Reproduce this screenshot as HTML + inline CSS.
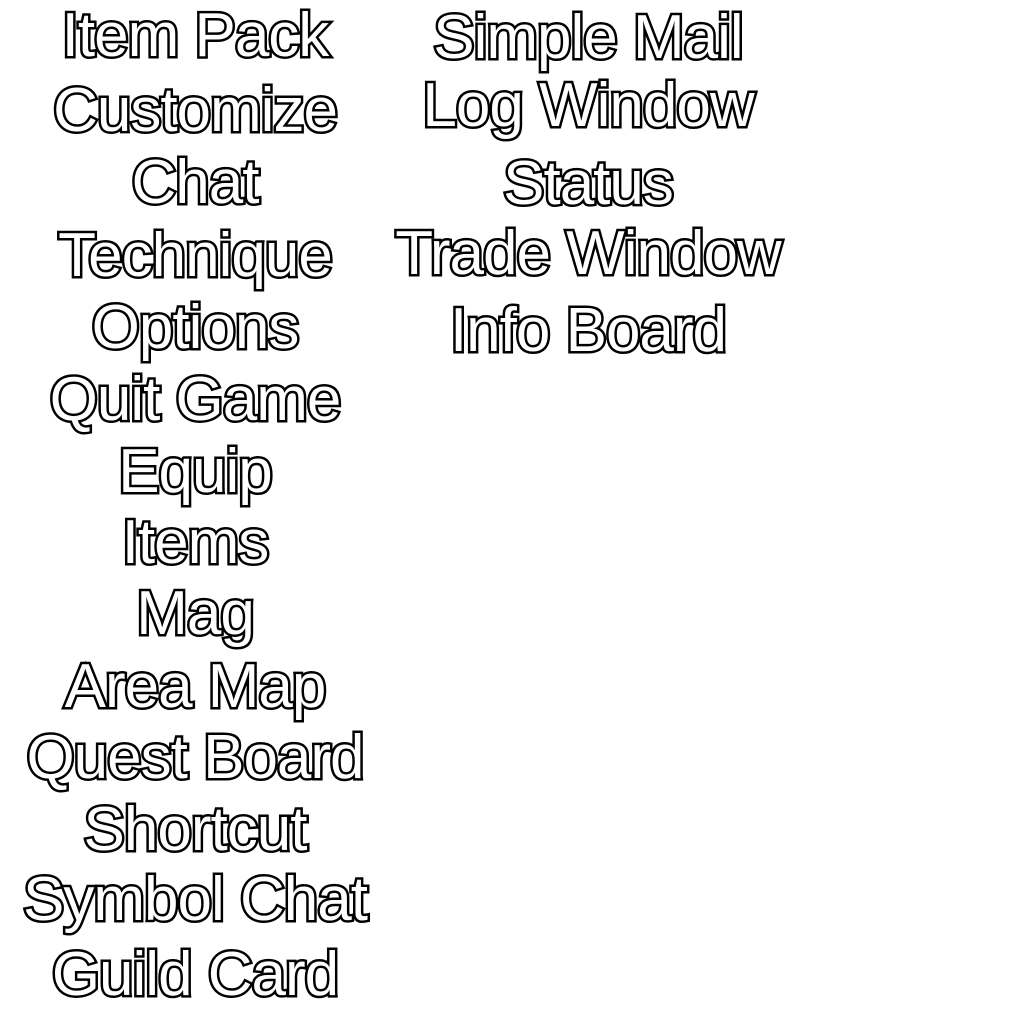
<!DOCTYPE html>
<html><head><meta charset="utf-8"><style>
html,body{margin:0;padding:0;background:#fff;width:1024px;height:1024px;overflow:hidden}
.t{position:absolute;width:500px;text-align:center;font-family:"Liberation Sans",sans-serif;font-size:62px;line-height:1;color:#fff;-webkit-text-stroke:5px #000;paint-order:stroke fill;white-space:nowrap;letter-spacing:-1px}
.l{left:-55px}.r{left:338px}
</style></head><body>
<div class="t l" style="top:5px">Item Pack</div>
<div class="t l" style="top:80px">Customize</div>
<div class="t l" style="top:152px">Chat</div>
<div class="t l" style="top:225px">Technique</div>
<div class="t l" style="top:297px">Options</div>
<div class="t l" style="top:369px">Quit Game</div>
<div class="t l" style="top:441px">Equip</div>
<div class="t l" style="top:512px">Items</div>
<div class="t l" style="top:583px">Mag</div>
<div class="t l" style="top:656px">Area Map</div>
<div class="t l" style="top:727px">Quest Board</div>
<div class="t l" style="top:799px">Shortcut</div>
<div class="t l" style="top:869px">Symbol Chat</div>
<div class="t l" style="top:944px">Guild Card</div>
<div class="t r" style="top:7px">Simple Mail</div>
<div class="t r" style="top:75px">Log Window</div>
<div class="t r" style="top:153px">Status</div>
<div class="t r" style="top:223px">Trade Window</div>
<div class="t r" style="top:300px">Info Board</div>
</body></html>
